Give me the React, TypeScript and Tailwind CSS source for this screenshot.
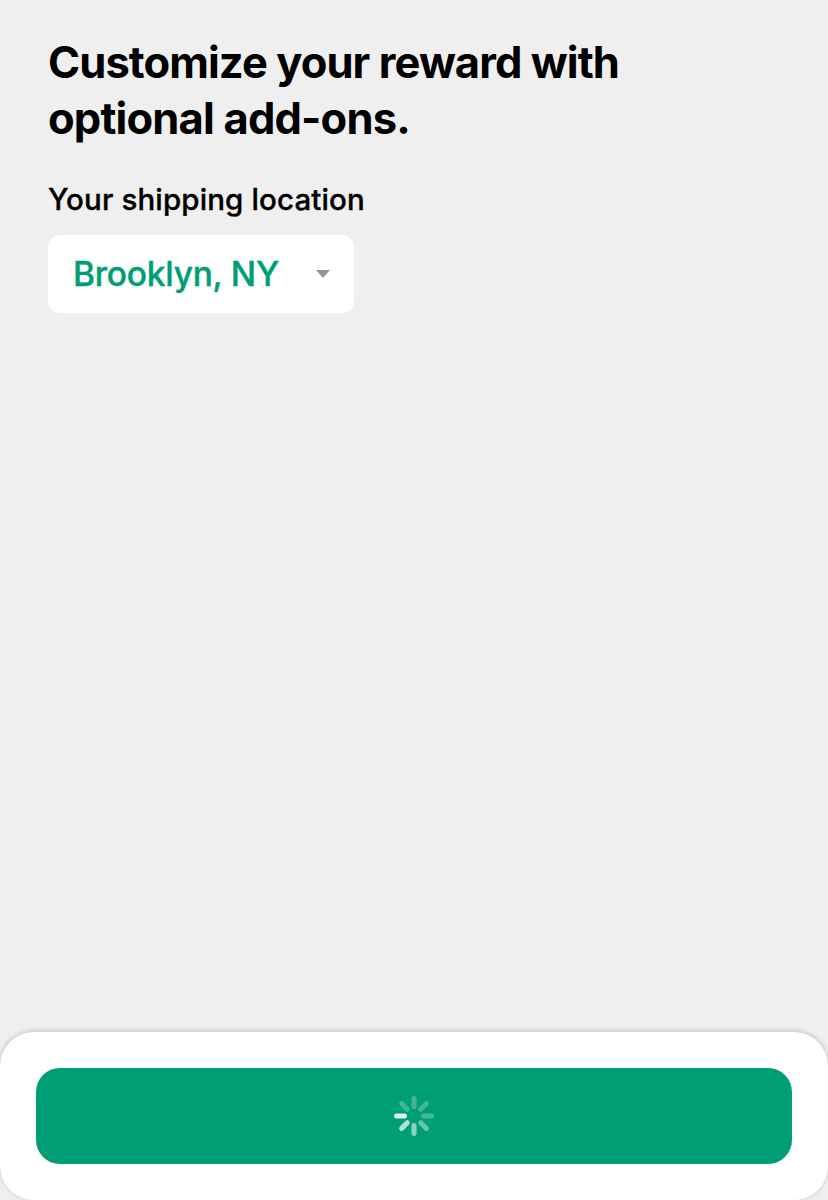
const SPOKES = [0.25, 0.25, 0.26, 0.4, 0.55, 0.7, 0.87, 0.25];

function Spinner() {
  return (
    <svg width="42" height="42" viewBox="-21 -21 42 42" fill="none" aria-hidden="true">
      {SPOKES.map((opacity, i) => (
        <line key={i} x1="0" y1="-9.5" x2="0" y2="-17.5" stroke="white" strokeWidth="5" strokeLinecap="round" opacity={opacity} transform={`rotate(${i * 45})`} />
      ))}
    </svg>
  );
}

export default function App() {
  return (
    <div className="flex h-[1200px] w-[828px] flex-col overflow-hidden bg-[#efefef] font-['Inter',sans-serif] text-black">
      <main className="flex-1 px-12 pt-[34px]">
        <h1 className="w-[620px] text-[43.5px] leading-[56px] font-bold tracking-[-0.93px]">
          Customize your reward with<br />
          <span className="tracking-[-0.83px]">optional add-ons.</span>
        </h1>
        <h2 className="mt-[35px] text-[29.5px] leading-[36px] font-medium tracking-[0.13px] whitespace-nowrap [-webkit-text-stroke:0.35px]">Your shipping location</h2>
        <button className="mt-[18px] flex h-[78px] w-[306px] items-center justify-between rounded-xl bg-white pr-6 pl-[25px] text-[#009e74]">
          <span className="text-[33.5px] leading-[40px] font-medium tracking-[-0.25px] whitespace-nowrap [-webkit-text-stroke:0.4px]">Brooklyn, NY</span>
          <svg width="14" height="8" viewBox="0 0 14 8" fill="#929695" aria-hidden="true"><path d="M0 0H14L7 8Z" /></svg>
        </button>
      </main>
      <footer className="h-[168px] rounded-[34px] bg-white px-9 pt-9 shadow-[0_-1px_5px_rgba(0,0,0,0.2)]">
        <button aria-label="Loading" className="flex h-24 w-full items-center justify-center rounded-3xl bg-[#009e74]"><Spinner /></button>
      </footer>
    </div>
  );
}
